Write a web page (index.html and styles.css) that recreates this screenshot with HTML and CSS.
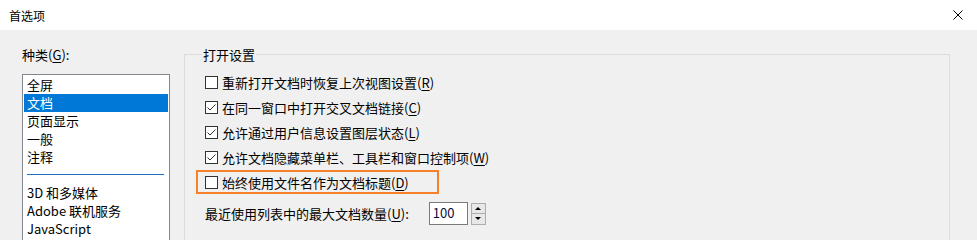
FILE: index.html
```html
<!DOCTYPE html>
<html lang="zh-CN">
    <head>
        <meta charset="UTF-8">
        <title>首选项</title>
        <link rel="stylesheet" href="styles.css">
    </head>
    <body>
        <div class="titlebar">
            <span class="title">首选项</span>
            <svg class="close" width="10" height="10" viewBox="0 0 10 10">
                <path d="M0.5 0.5 L9.5 9.5 M9.5 0.5 L0.5 9.5" stroke="#000" stroke-width="1" fill="none"/>
            </svg>
        </div>
        <div class="content">
            <div class="left">
                <div class="caption">种类(<u>G</u>):</div>
                <ul class="list">
                    <li>全屏</li>
                    <li class="selected">文档</li>
                    <li>页面显示</li>
                    <li>一般</li>
                    <li>注释</li>
                    <li class="separator"></li>
                    <li>3D 和多媒体</li>
                    <li>Adobe 联机服务</li>
                    <li>JavaScript</li>
                </ul>
            </div>
            <fieldset class="group">
                <legend>打开设置</legend>
                <label class="row">
                    <span class="check"></span>
                    <span>重新打开文档时恢复上次视图设置(<u>R</u>)</span>
                </label>
                <label class="row">
                    <span class="check checked">
                        <svg width="11" height="11" viewBox="0 0 11 11"><polyline points="1.5,5.5 4,8 9.5,2.5" stroke="#333" stroke-width="1" fill="none"/></svg>
                    </span>
                    <span>在同一窗口中打开交叉文档链接(<u>C</u>)</span>
                </label>
                <label class="row">
                    <span class="check checked">
                        <svg width="11" height="11" viewBox="0 0 11 11"><polyline points="1.5,5.5 4,8 9.5,2.5" stroke="#333" stroke-width="1" fill="none"/></svg>
                    </span>
                    <span>允许通过用户信息设置图层状态(<u>L</u>)</span>
                </label>
                <label class="row">
                    <span class="check checked">
                        <svg width="11" height="11" viewBox="0 0 11 11"><polyline points="1.5,5.5 4,8 9.5,2.5" stroke="#333" stroke-width="1" fill="none"/></svg>
                    </span>
                    <span>允许文档隐藏菜单栏、工具栏和窗口控制项(<u>W</u>)</span>
                </label>
                <label class="row highlight">
                    <span class="check"></span>
                    <span>始终使用文件名作为文档标题(<u>D</u>)</span>
                </label>
                <div class="recent">
                    <span>最近使用列表中的最大文档数量(<u>U</u>):</span>
                    <span class="number">100</span>
                    <span class="spinner">
                        <span class="spin up"></span>
                        <span class="spin down"></span>
                    </span>
                </div>
            </fieldset>
        </div>
    </body>
</html>
```

FILE: styles.css
```css
* {
    box-sizing: border-box;
}

body {
    margin: 0;
    font-family: "Noto Sans CJK SC", "Noto Sans", sans-serif;
    font-size: 13px;
    line-height: 17px;
    color: #000;
    background: #f0f0f0;
    overflow: hidden;
}

u {
    text-decoration: underline;
    text-underline-offset: 2px;
}

.titlebar {
    height: 30px;
    background: #fff;
    display: flex;
    align-items: center;
    justify-content: space-between;
    padding: 0 14px 0 9px;
}

.title {
    font-size: 12px;
}

.close {
    display: block;
}

.content {
    display: flex;
    align-items: flex-start;
    height: 210px;
    overflow: hidden;
}

.left {
    width: 148px;
    margin-left: 22px;
    padding-top: 16px;
}

.caption {
    margin-bottom: 11px;
}

.list {
    list-style: none;
    margin: 0;
    padding: 1px;
    background: #fff;
    border: 1px solid #828790;
    height: 180px;
}

.list li {
    height: 18px;
    line-height: 18px;
    padding-left: 3px;
    white-space: nowrap;
}

.list li.selected {
    background: #0078d7;
    color: #fff;
}

.list li.separator {
    padding-top: 8px;
}

.list li.separator::after {
    content: "";
    display: block;
    margin: 0 4px 0 0;
    height: 1px;
    background: #1c6fc0;
}

.group {
    margin: 16px 0 0 14px;
    width: 766px;
    height: 220px;
    border: 1px solid #dcdcdc;
    padding: 7px 0 0 11px;
}

.group legend {
    padding: 0 1px;
    margin-left: 6px;
}

.row {
    display: flex;
    align-items: center;
    width: fit-content;
    height: 25px;
    border: 2px solid transparent;
    padding: 0 28px 0 7px;
}

.row.highlight {
    border-color: #f5822a;
    height: 24px;
}

.check {
    width: 13px;
    height: 13px;
    border: 1px solid #333;
    background: #fff;
    margin-right: 4px;
    display: flex;
    align-items: center;
    justify-content: center;
}

.check svg {
    display: block;
}

.recent {
    display: flex;
    align-items: center;
    margin-top: 8px;
    padding-left: 9px;
    height: 23px;
}

.number {
    width: 39px;
    height: 23px;
    margin-left: 20px;
    background: #fff;
    border: 1px solid #7a7a7a;
    padding-left: 3px;
    line-height: 20px;
    color: #0a0a3a;
}

.spinner {
    display: flex;
    flex-direction: column;
    margin-left: 3px;
    height: 22px;
}

.spin {
    width: 15px;
    height: 11px;
    border: 1px solid #adadad;
    background: #e8e8e8;
    display: flex;
    align-items: center;
    justify-content: center;
}

.spin.down {
    border-top: none;
}

.spin::after {
    content: "";
    border-left: 3px solid transparent;
    border-right: 3px solid transparent;
}

.spin.up::after {
    border-bottom: 3px solid #000;
}

.spin.down::after {
    border-top: 3px solid #000;
}
```
